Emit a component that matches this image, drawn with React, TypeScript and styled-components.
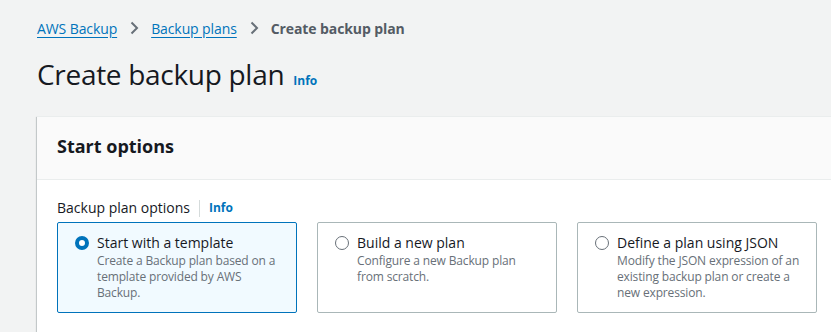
import styled, { createGlobalStyle } from "styled-components";

const GlobalStyle = createGlobalStyle`
  html, body {
    margin: 0;
    padding: 0;
    background: #f2f3f3;
    overflow: hidden;
  }
  body {
    font-family: "Open Sans", "Noto Sans", sans-serif;
    color: #16191f;
  }
`;

type OptionData = {
    title: string;
    description: string;
    selected?: boolean;
};

const options: OptionData[] = [
    {
        title: "Start with a template",
        description: "Create a Backup plan based on a template provided by AWS Backup.",
        selected: true,
    },
    {
        title: "Build a new plan",
        description: "Configure a new Backup plan from scratch.",
    },
    {
        title: "Define a plan using JSON",
        description: "Modify the JSON expression of an existing backup plan or create a new expression.",
    },
];

const Chevron = () => (
    <svg width="10" height="14" viewBox="0 0 10 14" fill="none">
        <path d="M2.5 1.5 L8 7 L2.5 12.5" stroke="#687078" strokeWidth="2" />
    </svg>
);

const App = () => {
    return (
        <Page>
            <GlobalStyle/>
            <Breadcrumbs>
                <Crumb href="#">AWS Backup</Crumb>
                <Chevron/>
                <Crumb href="#">Backup plans</Crumb>
                <Chevron/>
                <Current>Create backup plan</Current>
            </Breadcrumbs>
            <Heading>
                <PageTitle>Create backup plan</PageTitle>
                <InfoLink href="#">Info</InfoLink>
            </Heading>
            <Panel>
                <PanelHeader>
                    <PanelTitle>Start options</PanelTitle>
                </PanelHeader>
                <PanelBody>
                    <FieldLabel>
                        <span>Backup plan options</span>
                        <Divider/>
                        <InfoLink href="#">Info</InfoLink>
                    </FieldLabel>
                    <Tiles>
                        {options.map((o) => (
                            <Tile key={o.title} selected={!!o.selected}>
                                <Radio selected={!!o.selected}/>
                                <TileText>
                                    <TileTitle>{o.title}</TileTitle>
                                    <TileDesc>{o.description}</TileDesc>
                                </TileText>
                            </Tile>
                        ))}
                    </Tiles>
                </PanelBody>
            </Panel>
        </Page>
    );
};

export default App;

const Page = styled.div`
    padding: 17px 0 0 37px;
    width: 831px;
    box-sizing: border-box;
`

const Breadcrumbs = styled.nav`
    display: flex;
    align-items: center;
    gap: 12px;
    height: 22px;
    font-size: 14px;
    letter-spacing: -0.1px;
`

const Crumb = styled.a`
    color: #0073bb;
    text-decoration: underline;
    text-underline-offset: 3px;
`

const Current = styled.span`
    color: #545b64;
    font-weight: 700;
`

const Heading = styled.div`
    display: flex;
    align-items: baseline;
    gap: 9px;
    margin-top: 17px;
    height: 36px;
`

const PageTitle = styled.h1`
    margin: 0;
    font-size: 28px;
    font-weight: 400;
    line-height: 36px;
    letter-spacing: -0.3px;
    color: #16191f;
`

const InfoLink = styled.a`
    color: #0073bb;
    font-size: 12px;
    font-weight: 700;
    text-decoration: none;
`

const Panel = styled.section`
    margin-top: 24px;
    margin-right: -20px;
    background: #ffffff;
    box-shadow: 0 1px 1px 0 rgba(0, 28, 36, 0.3), 1px 1px 1px 0 rgba(0, 28, 36, 0.15), -1px 1px 1px 0 rgba(0, 28, 36, 0.15);
    border-top: 1px solid #eaeded;
`

const PanelHeader = styled.div`
    height: 63px;
    box-sizing: border-box;
    padding: 17px 20px 0;
    background: #fafafa;
    border-bottom: 1px solid #eaeded;
`

const PanelTitle = styled.h2`
    margin: 0;
    font-size: 18px;
    line-height: 24px;
    font-weight: 700;
    color: #16191f;
`

const PanelBody = styled.div`
    padding: 17px 20px 20px;
`

const FieldLabel = styled.div`
    display: flex;
    align-items: center;
    gap: 9px;
    font-size: 14px;
    line-height: 22px;
    color: #16191f;
    margin-bottom: 3px;
`

const Divider = styled.span`
    width: 1px;
    height: 17px;
    background: #d5dbdb;
`

const Tiles = styled.div`
    display: grid;
    grid-template-columns: repeat(3, 240px);
    gap: 20px;
`

const Tile = styled.div<{ selected: boolean }>`
    display: flex;
    gap: 8px;
    height: 91px;
    box-sizing: border-box;
    padding: 10px 13px 0 17px;
    border: 1px solid ${(p) => (p.selected ? "#0073bb" : "#aab7b8")};
    border-radius: 2px;
    background: ${(p) => (p.selected ? "#f1faff" : "#ffffff")};
`

const Radio = styled.span<{ selected: boolean }>`
    flex: none;
    width: 14px;
    height: 14px;
    margin-top: 3px;
    box-sizing: border-box;
    border-radius: 50%;
    border: ${(p) => (p.selected ? "4px solid #0073bb" : "1.5px solid #687078")};
    background: #ffffff;
`

const TileText = styled.div`
    display: flex;
    flex-direction: column;
    min-width: 0;
    flex: 1;
`

const TileTitle = styled.div`
    font-size: 14px;
    line-height: 20px;
    color: #16191f;
`

const TileDesc = styled.div`
    font-size: 12px;
    line-height: 16px;
    letter-spacing: -0.15px;
    color: #687078;
`
